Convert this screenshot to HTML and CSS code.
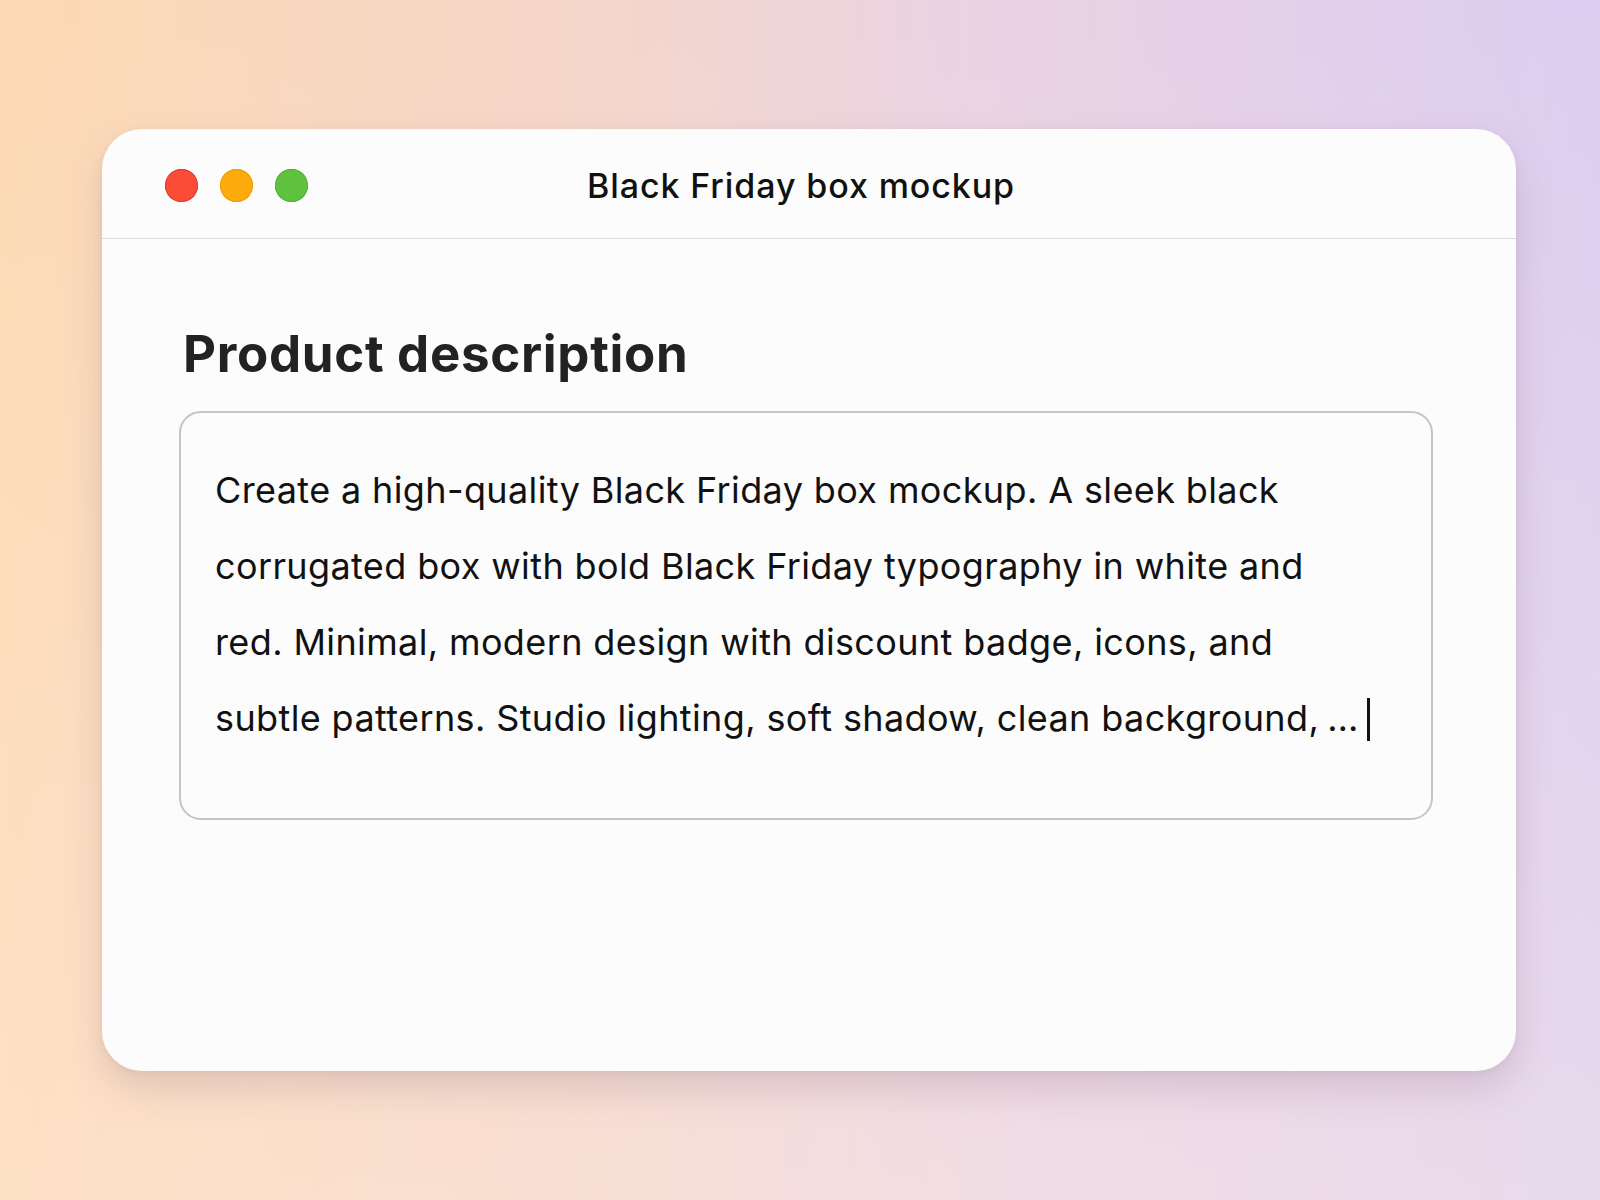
FILE: index.html
```html
<!DOCTYPE html>
<html lang="en">
<head>
<meta charset="utf-8">
<title>Black Friday box mockup</title>
<link rel="stylesheet" href="styles.css">
</head>
<body>
<div class="window">
  <div class="titlebar">
    <div class="lights">
      <span class="light red"></span>
      <span class="light yellow"></span>
      <span class="light green"></span>
    </div>
    <div class="title">Black Friday box mockup</div>
  </div>
  <div class="content">
    <h1 class="heading">Product description</h1>
    <div class="field">
      <p class="field-text"><span class="line">Create a high-quality Black Friday box mockup. A sleek black</span><span class="line">corrugated box with bold Black Friday typography in white and</span><span class="line">red. Minimal, modern design with discount badge, icons, and</span><span class="line">subtle patterns. Studio lighting, soft shadow, clean background,<span class="ellipsis"> …</span><span class="caret"></span></span></p>
    </div>
  </div>
</div>
</body>
</html>
```
FILE: styles.css
```css
html, body {
  margin: 0;
  padding: 0;
}
body {
  width: 1600px;
  height: 1200px;
  box-sizing: border-box;
  padding: 129px 0 0 102px;
  font-family: "Inter", "Noto Sans", sans-serif;
  color: #111;
  background:
    linear-gradient(180deg, rgba(255,255,255,0) 0%, rgba(255,240,230,0.35) 100%),
    linear-gradient(90deg, #fdd9b3 0%, #f5d6c8 35%, #ead3e2 60%, #dccdf1 100%);
  overflow: hidden;
}
.window {
  width: 1414px;
  height: 942px;
  background: #fcfcfc;
  border-radius: 40px;
  box-shadow: 0 18px 36px rgba(130, 100, 120, 0.22), 0 2px 6px rgba(120, 90, 110, 0.08);
  display: flex;
  flex-direction: column;
  overflow: hidden;
}
.titlebar {
  height: 109px;
  border-bottom: 1.5px solid #dcdcdc;
  display: flex;
  align-items: center;
  flex-shrink: 0;
}
.lights {
  display: flex;
  gap: 22px;
  padding-left: 63px;
  padding-top: 4px;
}
.light {
  width: 33px;
  height: 33px;
  border-radius: 50%;
  display: block;
}
.red { background: #fb4c37; box-shadow: inset 0 0 0 1px #e03b2a; }
.yellow { background: #fdaa0c; box-shadow: inset 0 0 0 1px #eb9d05; }
.green { background: #5ec23f; box-shadow: inset 0 0 0 1px #4fb133; }
.title {
  margin-left: 279px;
  padding-top: 4px;
  font-size: 34px;
  font-weight: 500;
  color: #111;
  letter-spacing: 0.9px;
}
.content {
  padding: 85px 83px 0 77px;
}
.heading {
  margin: 0 0 27px 4px;
  font-size: 51px;
  font-weight: 700;
  color: #222;
  line-height: 60px;
  letter-spacing: 0.7px;
}
.field {
  width: 1254px;
  height: 409px;
  box-sizing: border-box;
  border: 2px solid #c4c4c4;
  border-radius: 22px;
  padding: 39px 32px 0 34px;
}
.field-text {
  margin: 0;
  font-size: 36px;
  line-height: 76px;
  color: #111;
  letter-spacing: 0.38px;
}
.line {
  display: block;
  white-space: nowrap;
}
.ellipsis {
  letter-spacing: -2px;
}
.caret {
  display: inline-block;
  width: 3px;
  height: 43px;
  background: #111;
  margin-left: 11px;
  vertical-align: -10px;
}
```
